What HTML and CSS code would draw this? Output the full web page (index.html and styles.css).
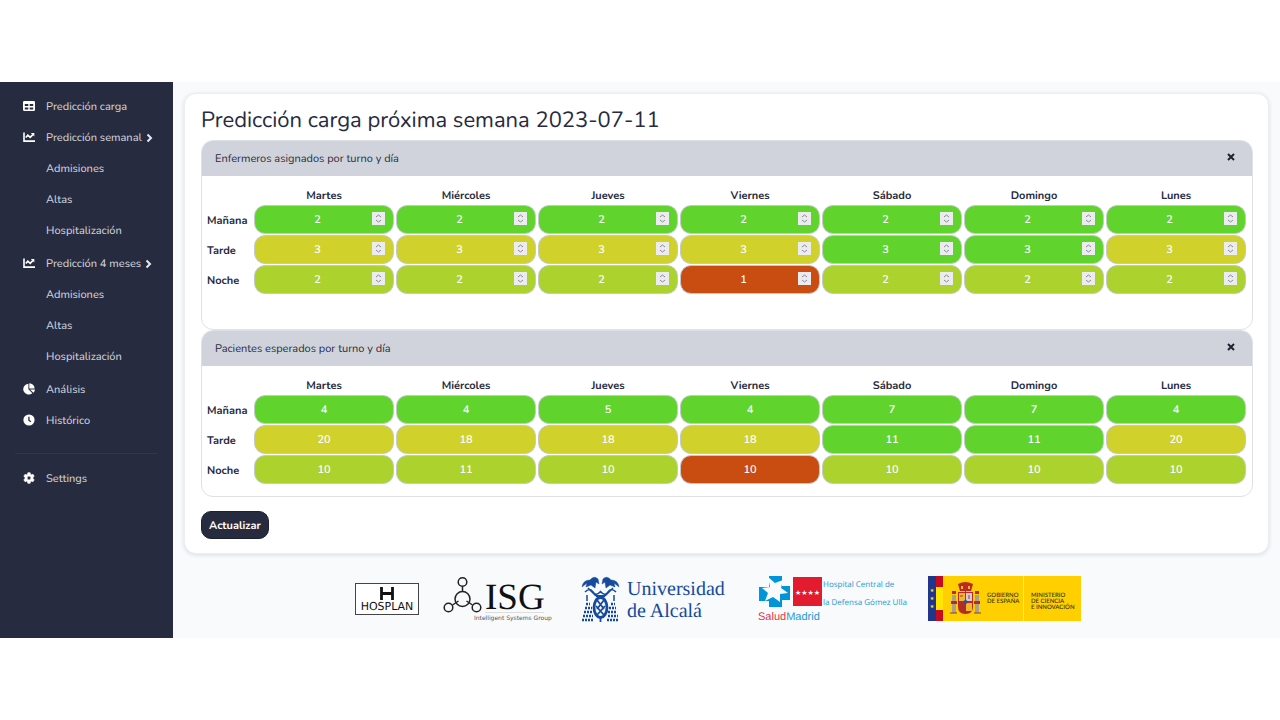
FILE: index.html
```html
<!DOCTYPE html>
<html lang="es">
<head>
<meta charset="utf-8">
<meta name="viewport" content="width=device-width, initial-scale=1">
<title>Predicción carga</title>
<link rel="stylesheet" href="styles.css">
</head>
<body>
<div class="app">
  <nav class="sidebar" aria-label="Principal">
    <ul class="menu">
      <li><a class="item" href="#"><svg class="icon" viewBox="0 0 12 12"><path fill="#fff" fill-rule="evenodd" d="M1.500 1h9Q12 1 12 2.300v7.400Q12 11 10.500 11h-9Q0 11 0 9.700V2.300Q0 1 1.500 1zM1.800 4v2h3.500V4zM6.700 4v2h3.500V4zM1.800 7.400v2h3.500v-2zM6.700 7.400v2h3.500v-2z"/></svg>Predicción carga</a></li>
      <li>
        <button class="item" type="button"><svg class="icon" viewBox="0 0 12 12"><path fill="none" stroke="#fff" stroke-width="1.600" d="M1 1.500v8.600h11M2.800 6.500l2-2.300 2.400 2.200 2.600-2.800"/><path fill="#fff" d="M7.800 2H11.300V5.600z"/></svg>Predicción semanal<svg class="chevron" viewBox="0 0 7 10"><path d="M1.500 1.500L5 5 1.500 8.500"/></svg></button>
        <ul class="submenu">
          <li><a class="item" href="#">Admisiones</a></li>
          <li><a class="item" href="#">Altas</a></li>
          <li><a class="item" href="#">Hospitalización</a></li>
        </ul>
      </li>
      <li>
        <button class="item" type="button"><svg class="icon" viewBox="0 0 12 12"><path fill="none" stroke="#fff" stroke-width="1.600" d="M1 1.500v8.600h11M2.800 6.500l2-2.300 2.400 2.200 2.600-2.800"/><path fill="#fff" d="M7.800 2H11.300V5.600z"/></svg>Predicción 4 meses<svg class="chevron" viewBox="0 0 7 10"><path d="M1.500 1.500L5 5 1.500 8.500"/></svg></button>
        <ul class="submenu">
          <li><a class="item" href="#">Admisiones</a></li>
          <li><a class="item" href="#">Altas</a></li>
          <li><a class="item" href="#">Hospitalización</a></li>
        </ul>
      </li>
      <li><a class="item" href="#"><svg class="icon" viewBox="0 0 12 12"><path fill="#fff" d="M5.400.8v5.500l3.900 3.900A5.400 5.400 0 1 1 5.400.8zM6.300.2a5.300 5.300 0 0 1 5.300 5.300H6.300zM7 6.400h5a5.300 5.300 0 0 1-1.600 3.400z"/></svg>Análisis</a></li>
      <li><a class="item" href="#"><svg class="icon" viewBox="0 0 12 12"><circle cx="6" cy="6" r="5.600" fill="#fff"/><path d="M5.900 2.700v3.500l2 1.600" fill="none" stroke="#272b40" stroke-width="1.300"/></svg>Histórico</a></li>
    </ul>
    <hr class="rule">
    <a class="item" href="#"><svg class="icon" viewBox="0 0 12 12"><path fill="#fff" stroke="#fff" stroke-width=".6" stroke-linejoin="round" fill-rule="evenodd" d="M4.800.7h2.400l.3 1.500 1 .6 1.500-.5 1.200 2-1.200 1v1.400l1.200 1-1.200 2-1.500-.5-1 .6-.3 1.500H4.800l-.3-1.500-1-.6-1.500.5-1.200-2 1.200-1V5.300l-1.200-1 1.200-2 1.500.5 1-.6zM6 4.100a1.900 1.900 0 1 0 0 3.800 1.900 1.900 0 0 0 0-3.800z"/></svg>Settings</a>
  </nav>

  <div class="page">
    <main class="card">
      <h1 class="title">Predicción carga próxima semana 2023-07-11</h1>
      <section class="panel panel-roomy">
        <header class="panel-head"><h2 class="panel-title">Enfermeros asignados por turno y día</h2><button class="close" type="button" aria-label="Cerrar"><svg viewBox="0 0 8 8"><path d="M1 1l6 6M7 1L1 7"/></svg></button></header>
        <table class="shifts" data-kind="number" data-rows="2222222|3333333|2221222"></table>
      </section>
      <section class="panel">
        <header class="panel-head"><h2 class="panel-title">Pacientes esperados por turno y día</h2><button class="close" type="button" aria-label="Cerrar"><svg viewBox="0 0 8 8"><path d="M1 1l6 6M7 1L1 7"/></svg></button></header>
        <table class="shifts" data-kind="text" data-rows="4,4,5,4,7,7,4|20,18,18,18,11,11,20|10,11,10,10,10,10,10"></table>
      </section>
      <button class="update" type="button">Actualizar</button>
    </main>

    <footer class="logos">
      <svg width="65" height="48" viewBox="0 0 65 48" role="img" aria-label="Hosplan">
        <rect x=".5" y="8.500" width="63" height="31" fill="#fff" stroke="#444"/>
        <path d="M26.500 12v13M37.500 12v13M26 18.500h12" stroke="#111" stroke-width="2.800" fill="none"/>
        <text x="32" y="35" text-anchor="middle" font-family="DejaVu Sans" font-size="11" fill="#111">HOSPLAN</text>
      </svg>
      <svg width="120" height="48" viewBox="0 0 120 48" role="img" aria-label="ISG">
        <g fill="none" stroke="#222" stroke-width="1.500"><circle cx="22.500" cy="24" r="7.500"/><circle cx="22.500" cy="7" r="4.300"/><circle cx="8.500" cy="32.500" r="4.300"/><circle cx="36.500" cy="32.500" r="4.300"/><path d="M22.500 11.500v5M12.500 30l6-4M32.500 30l-6-4"/></g>
        <text x="45" y="34" font-family="Liberation Serif" font-size="37" fill="#111">ISG</text>
        <path d="M45 37.500h59" stroke="#ddd"/>
        <text x="34" y="45" class="isg-sub">Intelligent Systems Group</text>
      </svg>
      <svg width="155" height="48" viewBox="0 0 155 48" role="img" aria-label="Universidad de Alcalá">
        <g stroke="#164a9d" fill="none">
          <path d="M2 12q1-7 8-7 4-5 8-1l1 5-3-2-1 6-4-3-5 2 1-4zM39 12q-1-7-8-7-4-5-8-1l-1 5 3-2 1 6 4-3 5 2-1-4z" fill="#164a9d" stroke-width=".5"/>
          <path d="M5 17q5-5 8 0t8-1M36 17q-5-5-8 0t-8-1M8 13l8 8M33 13l-8 8M7 20v6M34 20v6" stroke-width="1.500"/>
          <path d="M6 29h4M5 33h7M4 37h9M3 41h10M2 45h12M31 29h4M29 33h7M28 37h9M28 41h10M27 45h12" stroke-width="2.400" stroke-dasharray="2 1"/>
          <ellipse cx="20.500" cy="32.500" rx="6.500" ry="10" fill="#f8fafc" stroke-width="2.800"/>
          <path d="M17 25l7 9M24 25l-7 9M16 31l8 9M25 31l-8 9M20.500 42v5M16 21h9" stroke-width="1.800"/>
        </g>
        <g font-family="Liberation Serif" font-size="20" fill="#164a9d"><text x="47" y="20">Universidad</text><text x="47" y="42">de Alcalá</text></g>
      </svg>
      <svg width="153" height="48" viewBox="0 0 153 48" role="img" aria-label="SaludMadrid, Hospital Central de la Defensa Gómez Ulla">
        <path fill="#0095d8" d="M14 1h13v10h8v14h-8v7H14v-6H4V12h10z"/>
        <path fill="#f8fafc" d="M13 2l7 6 8-3-2 8 7 5-8 1 0 8-7-5-8 4 3-8-6-5 8-1z"/>
        <path fill="#e31b2f" d="M38 2h29v29H38z"/>
        <text x="52.500" y="20" text-anchor="middle" font-family="DejaVu Sans" font-size="7" fill="#fff">★★★★</text>
        <text x="3" y="45" font-family="Liberation Sans" font-size="11" fill="#e2384b">Salud<tspan fill="#2499d4">Madrid</tspan></text>
        <g class="hospital"><text x="68" y="12">Hospital Central de</text><text x="68" y="30">la Defensa Gómez Ulla</text></g>
      </svg>
      <svg width="153" height="48" viewBox="0 0 153 48" role="img" aria-label="Gobierno de España, Ministerio de Ciencia e Innovación">
        <path fill="#ffcf00" d="M15 1h138v45H15z"/>
        <path fill="#20358c" d="M0 1h8v45H0z"/><path fill="#c60b1e" d="M8 1h7v11H8zM8 35h7v11H8z"/><path fill="#ffe600" d="M8 12h7v23H8z"/>
        <g fill="#ffdf3c" font-family="DejaVu Sans" font-size="5" text-anchor="middle"><text x="4" y="17">★</text><text x="4" y="25">★</text><text x="4" y="33">★</text></g>
        <g><path fill="#aaa18a" d="M24 20h4v18h-4zM47 20h4v18h-4z"/><path fill="#bd2827" d="M30 17h15v15q0 7-7.500 7T30 32zM30 9q7-4 15 0l-2 7H32zM23 26h6v3h-6zM46 26h6v3h-6zM24 16h4v3h-4zM47 16h4v3h-4z"/><path fill="#efba28" d="M31 18h6v8h-6zM38 28h6v8h-6zM33 11h2v3h-2zM40 11h2v3h-2z"/><path fill="#ddc8cf" d="M38 18h6v8h-6z"/><path d="M31 30h6M31 33h6M37.500 7v10M35 21h-3M41 20v4M22 38h7M46 38h7" stroke="#804536"/><circle cx="37.500" cy="27" r="2" fill="#384c9a"/></g>
        <path d="M95.500 1v45" stroke="#ffe680"/>
        <g class="ministry"><text x="59" y="22">GOBIERNO</text><text x="59" y="28">DE ESPAÑA</text><text x="103" y="22">MINISTERIO</text><text x="103" y="28">DE CIENCIA</text><text x="103" y="34">E INNOVACIÓN</text></g>
      </svg>
    </footer>
  </div>
</div>
<script src="tables.js"></script>
</body>
</html>
```

FILE: styles.css
```css
* { box-sizing: border-box; }
body {
  margin: 0;
  padding: 82px 0;
  background: #fff;
  color: #272b40;
  font-family: Nunito, Lato, sans-serif;
  font-size: 11px;
  text-rendering: geometricPrecision;
}
button, input { font: inherit; text-rendering: inherit; }
.app { display: grid; grid-template-columns: 173px 1fr; background: #f8fafc; }

.sidebar { background: #272b40; padding: 9px 15px; }
.menu, .submenu { list-style: none; margin: 0; padding: 0; }
.submenu { padding: 0 0 2px 23px; }
.item {
  display: flex;
  align-items: center;
  width: 100%;
  height: 31px;
  padding: 0 8px;
  border: 0;
  background: none;
  color: #cbced6;
  font-weight: 500;
  text-align: left;
  text-decoration: none;
  white-space: nowrap;
  cursor: pointer;
}
.icon { width: 12px; height: 12px; margin: 0 11px 1px 0; flex: none; }
.chevron { width: 7px; height: 10px; margin-left: 4px; flex: none; fill: none; stroke: #e8e9ee; stroke-width: 2; }
.rule { height: 1px; margin: 17px 0 9px; border: 0; background: #31364a; }

.page { min-width: 0; padding: 11px 11px 15px; }
.card {
  padding: 11px 15px 14px 16px;
  border: 1px solid #eceef1;
  border-radius: 12px;
  background: #fff;
  box-shadow: 0 1px 4px rgba(40, 50, 70, .14);
}
.title { margin: 0 0 5px; font-size: 22px; line-height: 30px; font-weight: 400; }
.panel { padding-bottom: 11px; border: 1px solid #dfe1e6; border-radius: 12px; overflow: hidden; }
.panel-roomy { padding-bottom: 34px; }
.panel-head {
  display: flex;
  align-items: center;
  justify-content: space-between;
  height: 35px;
  padding: 0 13px;
  background: #d0d3db;
}
.panel-title { margin: 0; font-size: 11px; font-weight: 400; }
.close { display: flex; padding: 2px 4px 6px; border: 0; background: none; cursor: pointer; }
.close svg { width: 8px; height: 8px; fill: none; stroke: #1e2233; stroke-width: 2; }

.shifts { width: 100%; padding: 9px 5px 0; border-spacing: 0; table-layout: fixed; }
.shifts th { height: 20px; padding: 0; font-weight: 700; }
.shifts .corner { width: 46px; height: 20px; }
.shifts tbody th { text-align: left; }
.shifts td { height: 30px; padding: 0 1px 1px; }
.cell {
  display: block;
  width: 100%;
  height: 29px;
  margin: 0;
  border: 1px solid #c3c9ce;
  border-radius: 11px;
  color: #fff;
  font-weight: 600;
  text-align: center;
}
.cell[type="number"] { padding: 0 8px; }
.cell::-webkit-inner-spin-button {
  -webkit-appearance: none;
  width: 13px;
  height: 13px;
  opacity: 1;
  background: #ececf0 url("data:image/svg+xml,%3Csvg xmlns='http://www.w3.org/2000/svg' viewBox='0 0 13 13'%3E%3Cpath d='M4 5l2.500-2L9 5M4 8l2.500 2L9 8' fill='none' stroke='%23888a90'/%3E%3C/svg%3E");
}
.low { background: #60d42d; }
.mild { background: #acd22e; }
.medium { background: #d1d12b; }
.high { background: #c94c10; }

.update {
  display: block;
  height: 28px;
  margin-top: 14px;
  padding: 0 7px;
  border: 1px solid #1c2033;
  border-radius: 10px;
  background: #272b40;
  color: #fff;
  font-weight: 700;
  cursor: pointer;
}

.logos { display: flex; flex-wrap: wrap; justify-content: center; gap: 20px; padding: 21px 18px 0 0; }
.isg-sub { font: 6px "DejaVu Sans", sans-serif; fill: #555; }
.hospital { font: 8px "Open Sans", sans-serif; fill: #2499d4; }
.ministry { font: 600 6px Lato, sans-serif; fill: #463b0b; }
```

FILE: tables.js
```js
const days = ["Martes", "Miércoles", "Jueves", "Viernes", "Sábado", "Domingo", "Lunes"];
const shifts = ["Mañana", "Tarde", "Noche"];
const levels = [
  ["low", "low", "low", "low", "low", "low", "low"],
  ["medium", "medium", "medium", "medium", "low", "low", "medium"],
  ["mild", "mild", "mild", "high", "mild", "mild", "mild"]
];

document.querySelectorAll(".shifts").forEach(table => {
  const kind = table.dataset.kind;
  const rows = table.dataset.rows.split("|").map(r => r.split(kind === "number" ? "" : ","));
  const head = days.map(d => `<th scope="col">${d}</th>`).join("");
  const body = rows.map((row, r) => {
    const cells = row.map((v, c) =>
      `<td><input class="cell ${levels[r][c]}" type="${kind}" value="${v}" aria-label="${shifts[r]} ${days[c]}"${kind === "text" ? " readonly" : ""}></td>`
    ).join("");
    return `<tr><th scope="row">${shifts[r]}</th>${cells}</tr>`;
  }).join("");
  table.innerHTML = `<thead><tr><td class="corner"></td>${head}</tr></thead><tbody>${body}</tbody>`;
});
```
